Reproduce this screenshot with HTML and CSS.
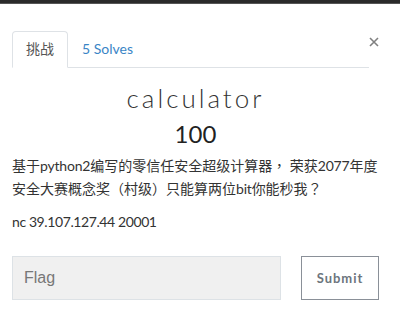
FILE: index.html
```html
<!DOCTYPE html>
<html>
<head>
<meta charset="utf-8">
<link rel="stylesheet" href="styles.css">
</head>
<body>
<div class="topbar"></div>
<div class="modal">
  <div class="head">
    <ul class="tabs">
      <li class="tab active">挑战</li>
      <li class="tab link">5 Solves</li>
    </ul>
    <button class="close" aria-label="Close">
      <svg width="10" height="10" viewBox="0 0 10 10"><path d="M1 1 L9 9 M9 1 L1 9" stroke="#808080" stroke-width="1.6" fill="none"/></svg>
    </button>
  </div>
  <h2 class="title">calculator</h2>
  <h3 class="value">100</h3>
  <p class="desc">基于<span class="lat">python2</span>编写的零信任安全超级计算器<span class="pn">，</span> 荣获<span class="lat">2077</span>年度安全大赛概念奖<span class="pn">（</span>村级<span class="pn">）</span>只能算两位<span class="lat">bit</span>你能秒我<span class="pn">？</span></p>
  <p class="desc nc">nc 39.107.127.44 20001</p>
  <form class="submit-row">
    <input class="flag" type="text" placeholder="Flag">
    <button class="btn" type="button">Submit</button>
  </form>
</div>
</body>
</html>
```
FILE: styles.css
```css
html, body {
  margin: 0;
  padding: 0;
  background: #fff;
  font-family: Lato, "Noto Sans CJK SC", sans-serif;
  color: #333;
}
.topbar {
  height: 4px;
  background: #2a2a2a;
  border-bottom: 1px solid #555;
  box-sizing: border-box;
}
.modal {
  padding: 27px 21px 0 12px;
}
.head {
  display: flex;
  align-items: flex-start;
}
.tabs {
  flex: 1;
  display: flex;
  list-style: none;
  margin: 0;
  padding: 0;
  border-bottom: 1px solid #dee2e6;
}
.tab {
  font-size: 14px;
  line-height: 20px;
  padding: 7px 13px 8px;
  margin-bottom: -1px;
  border: 1px solid transparent;
  border-radius: 4px 4px 0 0;
}
.tab.active {
  color: #555;
  border-color: #dee2e6 #dee2e6 #fff;
  background: #fff;
}
.tab.link {
  color: #3a85c6;
}
.close {
  border: 0;
  background: none;
  padding: 0;
  margin: 6px 0 0 0;
  width: 10px;
  height: 10px;
  line-height: 0;
}
.title {
  margin: 14px 0 0;
  text-align: center;
  font-weight: 300;
  font-size: 26px;
  line-height: 32px;
  letter-spacing: 3px;
  color: #333;
}
.value {
  margin: 3px 0 0;
  text-align: center;
  font-weight: 400;
  font-size: 24px;
  line-height: 34px;
  color: #222;
}
.desc {
  margin: 3px 0 0;
  font-size: 14px;
  line-height: 22px;
  color: #333;
}
.lat {
  letter-spacing: -0.2px;
}
.pn {
  font-family: "Noto Sans CJK TC", sans-serif;
}
.desc.nc {
  margin-top: 11px;
  letter-spacing: -0.4px;
}
.submit-row {
  display: flex;
  margin-top: 23px;
  gap: 20px;
}
.flag {
  width: 269px;
  height: 44px;
  box-sizing: border-box;
  background: #f0f0f0;
  border: 1px solid #dde2e6;
  padding: 0 11px;
  font-family: "Liberation Sans", Arial, sans-serif;
  font-size: 16px;
  color: #333;
  margin: 0;
}
.flag::placeholder {
  color: #777;
}
.btn {
  width: 78px;
  height: 44px;
  box-sizing: border-box;
  background: #fff;
  border: 1px solid #8a9098;
  font-family: Lato, sans-serif;
  font-weight: 700;
  font-size: 13px;
  letter-spacing: 1px;
  color: #6c757d;
  padding: 0;
}
```
